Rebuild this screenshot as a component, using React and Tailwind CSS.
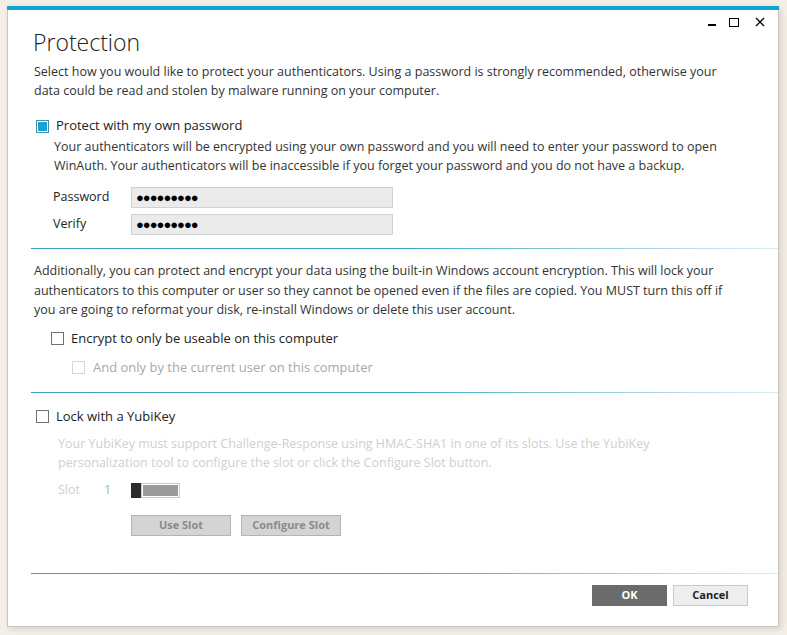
import React from 'react';

const font = { fontFamily: '"Open Sans", "Noto Sans", sans-serif' };

function Box({ checked, disabled }) {
  if (checked) {
    return (
      <span className="w-[13px] h-[13px] border border-[#4a8ba6] bg-white p-[1px] flex shrink-0">
        <span className="flex-1 bg-[#19a3d4]" />
      </span>
    );
  }
  return (
    <span
      className={
        'w-[13px] h-[13px] border bg-white shrink-0 ' +
        (disabled ? 'border-[#d6d6d6]' : 'border-[#707070]')
      }
    />
  );
}

function Divider() {
  return <div className="h-px ml-[23px] bg-linear-to-r from-[#3a9fbd] via-[#3aa6c4] to-[#d9eef5]" />;
}

function PwdField({ label }) {
  return (
    <div className="flex items-center h-[20px]">
      <span className="w-[78px] text-[#222]">{label}</span>
      <div className="w-[262px] h-[21px] bg-[#ebebeb] border border-[#d2d2d2] flex items-center pl-[4px] text-[13px] tracking-[-1px] text-black leading-none">
        ●●●●●●●●●
      </div>
    </div>
  );
}

export default function App() {
  return (
    <div className="w-[787px] h-[635px] bg-[#f3efe6] pt-[6px] pl-[7px] overflow-hidden" style={font}>
      <div className="w-[772px] h-[621px] bg-white border-x border-b border-[#c9c6c0] shadow-[2px_2px_6px_rgba(0,0,0,0.12)] flex flex-col text-[12.5px] text-[#333]">
        <div className="h-[4px] bg-[#13a4d3] -mx-px" />

        {/* title bar */}
        <div className="flex justify-end items-center h-[24px] pr-[13px] gap-[13px] text-black">
          <span className="w-[8px] h-[2px] bg-black mt-[6px]" />
          <span className="w-[10px] h-[9px] border border-black" />
          <svg width="10" height="10" viewBox="0 0 10 10" className="ml-[3px]">
            <path d="M1 1L9 9M9 1L1 9" stroke="black" strokeWidth="1.3" />
          </svg>
        </div>

        <div className="pl-[26px] pr-[4px]">
          <h1 className="text-[23px] font-light text-[#222] leading-[28px] -mt-[6px] ml-[-1px]">Protection</h1>
          <p className="mt-[6px] leading-[19px] whitespace-nowrap">
            Select how you would like to protect your authenticators. Using a password is strongly recommended, otherwise your
            <br />
            data could be read and stolen by malware running on your computer.
          </p>

          <div className="flex items-center gap-[7px] mt-[17px] ml-[2px] h-[18px]">
            <Box checked />
            <span className="text-[13px] text-[#222]">Protect with my own password</span>
          </div>
          <p className="ml-[20px] mt-[2px] leading-[19px] whitespace-nowrap">
            Your authenticators will be encrypted using your own password and you will need to enter your password to open
            <br />
            WinAuth. Your authenticators will be inaccessible if you forget your password and you do not have a backup.
          </p>

          <div className="ml-[19px] mt-[12px] flex flex-col gap-[7px]">
            <PwdField label="Password" />
            <PwdField label="Verify" />
          </div>
        </div>

        <div className="mt-[14px]">
          <Divider />
        </div>

        <div className="pl-[26px] pr-[4px]">
          <p className="mt-[12px] leading-[19.5px] whitespace-nowrap">
            Additionally, you can protect and encrypt your data using the built-in Windows account encryption. This will lock your
            <br />
            authenticators to this computer or user so they cannot be opened even if the files are copied. You MUST turn this off if
            <br />
            you are going to reformat your disk, re-install Windows or delete this user account.
          </p>
          <div className="flex items-center gap-[7px] mt-[10px] ml-[17px] h-[18px]">
            <Box />
            <span className="text-[13px] text-[#222]">Encrypt to only be useable on this computer</span>
          </div>
          <div className="flex items-center gap-[8px] mt-[11px] ml-[38px] h-[18px]">
            <Box disabled />
            <span className="text-[13px] text-[#a8a8a8]">And only by the current user on this computer</span>
          </div>
        </div>

        <div className="mt-[15px]">
          <Divider />
        </div>

        <div className="pl-[26px] pr-[4px]">
          <div className="flex items-center gap-[7px] mt-[15px] ml-[2px] h-[18px]">
            <Box />
            <span className="text-[13px] text-[#222]">Lock with a YubiKey</span>
          </div>
          <p className="ml-[24px] mt-[8px] leading-[19px] whitespace-nowrap text-[#cfcfcf]">
            Your YubiKey must support Challenge-Response using HMAC-SHA1 in one of its slots. Use the YubiKey
            <br />
            personalization tool to configure the slot or click the Configure Slot button.
          </p>
          <div className="flex items-center ml-[24px] mt-[10px] h-[18px] text-[#cfcfcf]">
            <span className="w-[46px]">Slot</span>
            <span className="w-[27px] text-[#b0b0b0]">1</span>
            <div className="flex items-center h-[15px]">
              <span className="w-[10px] h-[15px] bg-[#2b2b2b]" />
              <span className="w-[39px] h-[15px] border border-[#c8c8c8] p-[1px] flex">
                <span className="flex-1 bg-[#9a9a9a]" />
              </span>
            </div>
          </div>
          <div className="flex gap-[10px] ml-[97px] mt-[15px]">
            <button className="w-[100px] h-[21px] bg-[#d4d4d4] border border-[#b4b4b4] text-[11px] font-bold text-[#8a8a8a]">Use Slot</button>
            <button className="w-[100px] h-[21px] bg-[#d4d4d4] border border-[#b4b4b4] text-[11px] font-bold text-[#8a8a8a]">Configure Slot</button>
          </div>
        </div>

        <div className="mt-[37px]">
          <Divider />
        </div>

        <div className="flex justify-end gap-[6px] pr-[30px] mt-[11px]">
          <button className="w-[75px] h-[21px] bg-[#6b6b6b] text-white text-[11px] font-bold">OK</button>
          <button className="w-[75px] h-[21px] bg-[#eeeeee] border border-[#c9c9c9] text-[11px] font-bold text-[#222]">Cancel</button>
        </div>
      </div>
    </div>
  );
}
